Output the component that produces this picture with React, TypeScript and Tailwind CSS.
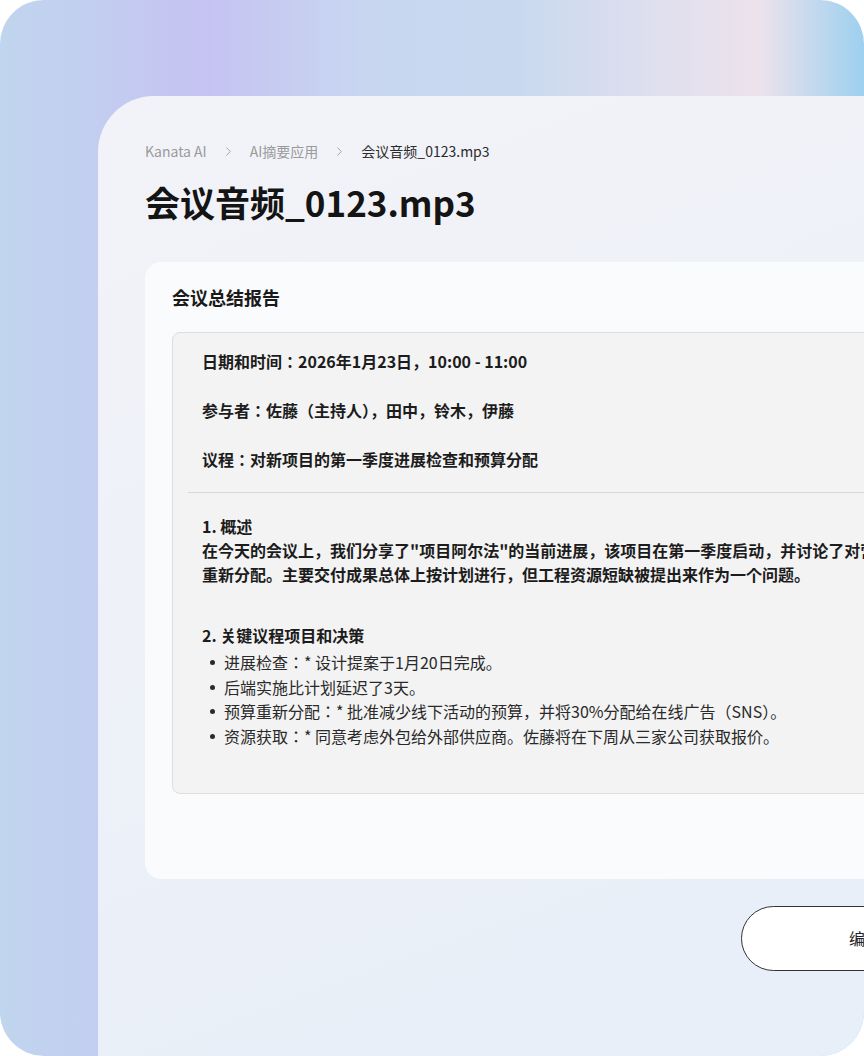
import { ChevronRight } from 'lucide-react';

const font = { fontFamily: '"Noto Sans CJK JP", "Noto Sans CJK SC", "Noto Sans", sans-serif' };

const crumbs = ['Kanata AI', 'AI摘要应用'];

const decisions = [
  '进展检查：* 设计提案于1月20日完成。',
  '后端实施比计划延迟了3天。',
  '预算重新分配：* 批准减少线下活动的预算，并将30%分配给在线广告（SNS）。',
  '资源获取：* 同意考虑外包给外部供应商。佐藤将在下周从三家公司获取报价。',
];

function Breadcrumb() {
  return (
    <nav className="flex items-center gap-[14px] text-[14px] leading-5">
      {crumbs.map((c) => (
        <span key={c} className="flex items-center gap-[14px] text-[#9a9a9a]">
          <span>{c}</span>
          <ChevronRight size={15} strokeWidth={1.4} className="text-[#9a9a9a]" />
        </span>
      ))}
      <span className="text-[#2a2a2a]">会议音频_0123.mp3</span>
    </nav>
  );
}

function SummaryBox() {
  return (
    <div className="mt-[23px] rounded-lg border border-[#dedede] bg-[#f3f3f3] px-[15px] pt-[16px] pb-[44px] text-[16px] leading-6 text-[#1c1c1c]">
      <div className="px-[14px] font-bold">
        <p>日期和时间：2026年1月23日，10:00 - 11:00</p>
        <p className="mt-[25px]">参与者：佐藤（主持人），田中，铃木，伊藤</p>
        <p className="mt-[25px]">议程：对新项目的第一季度进展检查和预算分配</p>
      </div>
      <hr className="mt-[21px] border-t border-[#d6d6d6]" />
      <div className="px-[14px]">
        <h3 className="mt-[21px] font-bold">1. 概述</h3>
        <p className="whitespace-nowrap font-bold">
          在今天的会议上，我们分享了"项目阿尔法"的当前进展，该项目在第一季度启动，并讨论了对营销预算的
          <br />
          重新分配。主要交付成果总体上按计划进行，但工程资源短缺被提出来作为一个问题。
        </p>
        <h3 className="mt-[37px] font-bold">2. 关键议程项目和决策</h3>
        <ul className="mt-[3px] text-[#2a2a2a]">
          {decisions.map((d) => (
            <li key={d} className="flex items-center gap-[9px] whitespace-nowrap leading-[24.7px]">
              <span className="ml-[8px] h-[5px] w-[5px] rounded-full bg-[#2a2a2a]" />
              <span>{d}</span>
            </li>
          ))}
        </ul>
      </div>
    </div>
  );
}

export default function App() {
  return (
    <div className="h-[1056px] w-[864px] bg-white" style={font}>
      <div className="h-full overflow-hidden rounded-[44px] bg-[linear-gradient(90deg,#c0d5ee_0%,#c3cdf0_12%,#c5c3f2_24%,#c8d6f0_42%,#c8d9ef_60%,#e2e0ee_78%,#ece2ec_88%,#9dd0ef_100%)] pt-[96px] pl-[98px]">
        <div className="h-[1200px] w-[1100px] rounded-tl-[56px] bg-[linear-gradient(160deg,#f2f3f8_0%,#eef1f8_35%,#e8eff8_70%,#e3edf7_100%)] pt-[45px] pl-[47px]">
          <Breadcrumb />
          <h1 className="mt-[19px] text-[35px] leading-[44px] font-bold text-[#141414]">会议音频_0123.mp3</h1>
          <section className="mt-[38px] rounded-2xl bg-[#fafbfd] pt-[23px] pr-[27px] pb-[85px] pl-[27px]">
            <h2 className="text-[18px] leading-6 font-bold text-[#1a1a1a]">会议总结报告</h2>
            <SummaryBox />
          </section>
          <div className="mt-[27px] flex pl-[596px]">
            <button
              type="button"
              className="h-[65px] w-[248px] rounded-full border-[1.5px] border-[#333] bg-white text-[16px] text-[#222]"
            >
              编辑
            </button>
          </div>
        </div>
      </div>
    </div>
  );
}
